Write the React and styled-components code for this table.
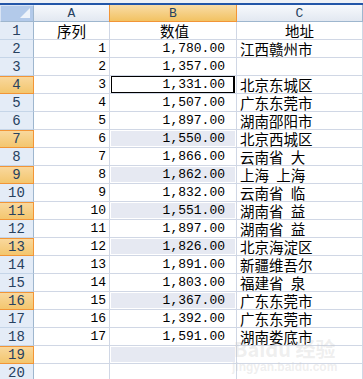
import React from 'react'
import styled, { createGlobalStyle, css } from 'styled-components'

const GlobalStyle = createGlobalStyle`
  html, body {
    margin: 0;
    padding: 0;
    background: #ffffff;
    overflow: hidden;
  }
`

const rows = [
  ['序列', '数值', '地址'],
  ['1', '1,780.00', '江西赣州市'],
  ['2', '1,357.00', ''],
  ['3', '1,331.00', '北京东城区'],
  ['4', '1,507.00', '广东东莞市'],
  ['5', '1,897.00', '湖南邵阳市'],
  ['6', '1,550.00', '北京西城区'],
  ['7', '1,866.00', '云南省 大'],
  ['8', '1,862.00', '上海 上海'],
  ['9', '1,832.00', '云南省 临'],
  ['10', '1,551.00', '湖南省 益'],
  ['11', '1,897.00', '湖南省 益'],
  ['12', '1,826.00', '北京海淀区'],
  ['13', '1,891.00', '新疆维吾尔'],
  ['14', '1,803.00', '福建省 泉'],
  ['15', '1,367.00', '广东东莞市'],
  ['16', '1,392.00', '广东东莞市'],
  ['17', '1,591.00', '湖南娄底市'],
  ['', '', ''],
  ['', '', ''],
]

const selectedRows = [4, 7, 9, 11, 13, 16, 19]
const activeRow = 4

const mono = `"Liberation Mono", "DejaVu Sans Mono", monospace`
const cjk = `"Noto Sans CJK SC", "Liberation Sans", sans-serif`

function App() {
  return (
    <>
      <GlobalStyle />
      <Page>
        <TopStrip />
        <Sheet>
          <Corner />
          <ColHead>A</ColHead>
          <ColHead active>B</ColHead>
          <ColHead last>C</ColHead>
          {rows.map((r, i) => {
            const n = i + 1
            const sel = selectedRows.includes(n)
            const header = n === 1
            return (
              <React.Fragment key={n}>
                <RowHead selected={sel}>{n}</RowHead>
                <Cell align={header ? 'center' : 'right'} cjk={header}>{r[0]}</Cell>
                <Cell align={header ? 'center' : 'right'} cjk={header} padRight={header ? 0 : 11}>
                  {sel && n !== activeRow && <SelFill />}
                  {n === activeRow && <ActiveBox />}
                  <span>{r[1]}</span>
                </Cell>
                <Cell align={header ? 'center' : 'left'} cjk last>{r[2]}</Cell>
              </React.Fragment>
            )
          })}
        </Sheet>
        <Watermark>
          <span className="big">Baidu 经验</span>
          <span className="small">jingyan.baidu.com</span>
        </Watermark>
      </Page>
    </>
  )
}

export default App

const Page = styled.div`
  position: relative;
  width: 363px;
  height: 379px;
  overflow: hidden;
  background: #ffffff;
`

const TopStrip = styled.div`
  height: 3px;
  background: #eef1f6;
  border-bottom: 2px solid #2356a8;
`

const Sheet = styled.div`
  display: grid;
  grid-template-columns: 34px 76px 127px 126px;
  grid-auto-rows: 18px;
  grid-template-rows: 17px;
`

const Corner = styled.div`
  position: relative;
  box-sizing: border-box;
  background: #b3caea;
  border: 1px solid #d9e4f4;
  border-right: 1px solid #9eb6ce;
  border-bottom: 1px solid #9eb6ce;
  &::after {
    content: '';
    position: absolute;
    right: 3px;
    bottom: 3px;
    width: 0;
    height: 0;
    border-left: 10px solid transparent;
    border-bottom: 10px solid #eef3fa;
  }
`

const ColHead = styled.div`
  box-sizing: border-box;
  display: flex;
  align-items: center;
  justify-content: center;
  font-family: ${mono};
  font-size: 13px;
  color: #27415f;
  background: linear-gradient(#f7f9fc, #e2e8f1);
  border-right: 1px solid ${p => (p.last ? '#9eb6ce' : '#d5dde8')};
  border-bottom: 1px solid #9eb6ce;
  ${p =>
    p.active &&
    css`
      background: linear-gradient(#f9dca6, #f2c262);
      border-right: 1px solid #f29536;
      border-left: 1px solid #f29536;
      margin-left: -1px;
      border-bottom: 1px solid #f29536;
    `}
`

const RowHead = styled.div`
  box-sizing: border-box;
  display: flex;
  align-items: center;
  justify-content: center;
  font-family: ${mono};
  font-size: 14px;
  color: #27415f;
  background: #e4ecf7;
  border-right: 1px solid #9eb6ce;
  border-bottom: 1px solid #c5d5e8;
  ${p =>
    p.selected &&
    css`
      background: linear-gradient(#f9d9a0, #f3c66e);
      border-right: 1px solid #f29536;
      border-bottom: 1px solid #f29536;
      box-shadow: inset 0 1px 0 #f29536;
    `}
`

const Cell = styled.div`
  position: relative;
  box-sizing: border-box;
  display: flex;
  align-items: center;
  justify-content: ${p =>
    p.align === 'center' ? 'center' : p.align === 'right' ? 'flex-end' : 'flex-start'};
  padding: 1px ${p => (p.padRight !== undefined ? p.padRight : 3)}px 0 3px;
  font-family: ${p => (p.cjk ? cjk : mono)};
  font-size: ${p => (p.cjk ? '14.5px' : '13px')};
  line-height: 16px;
  word-spacing: 4px;
  color: #000000;
  white-space: nowrap;
  border-right: 1px solid #d0d7e5;
  border-bottom: 1px solid #d0d7e5;
  span {
    position: relative;
  }
`

const SelFill = styled.div`
  position: absolute;
  left: 1px;
  right: 1px;
  top: 1px;
  bottom: 1px;
  background: #e6e9f2;
`

const ActiveBox = styled.div`
  position: absolute;
  left: 1px;
  right: 1px;
  top: 0;
  bottom: 0;
  border: 1px solid #000000;
  border-right-width: 2px;
`

const Watermark = styled.div`
  position: absolute;
  left: 232px;
  top: 338px;
  display: flex;
  flex-direction: column;
  align-items: center;
  pointer-events: none;
  .big {
    font-family: ${cjk};
    font-size: 20px;
    font-weight: 700;
    line-height: 22px;
    color: rgba(200, 200, 200, 0.3);
  }
  .small {
    font-family: "Liberation Sans", sans-serif;
    font-size: 12px;
    font-weight: 700;
    line-height: 14px;
    color: rgba(200, 200, 200, 0.3);
  }
`
